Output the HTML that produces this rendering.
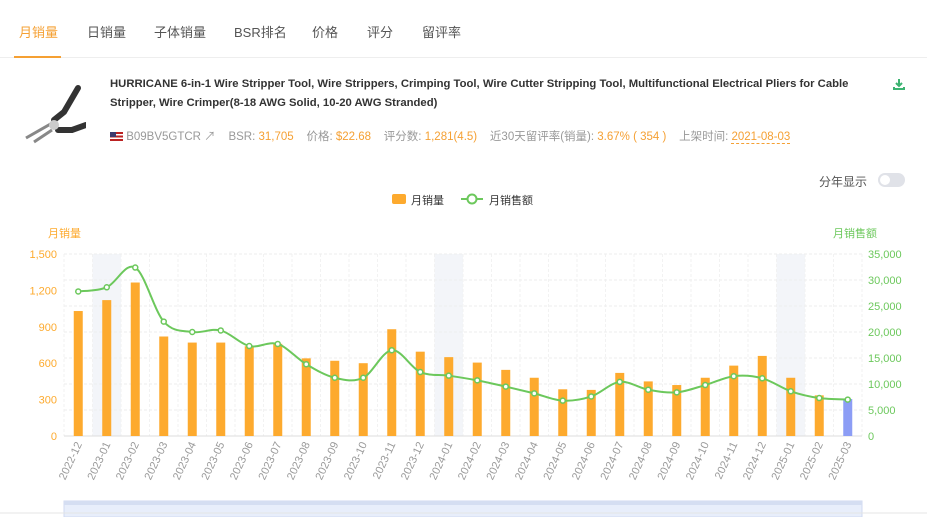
<!DOCTYPE html>
<html><head><meta charset="utf-8"><style>
*{margin:0;padding:0;box-sizing:border-box}
body{width:927px;height:517px;overflow:hidden;background:#fff;font-family:"Liberation Sans","Noto Sans CJK SC",sans-serif;position:relative}
.tabs{position:absolute;left:0;top:0;width:927px;height:58px;border-bottom:1px solid #eee}
.tab{position:absolute;top:22px;font-size:13px;color:#555}
.tab.a{color:#f5a033}
.ul{position:absolute;left:14px;top:56px;width:47px;height:2px;background:#f5a033}
.title{position:absolute;left:110px;top:75px;width:780px;font-size:11.3px;font-weight:bold;color:#333;line-height:19px}
.meta{position:absolute;left:110px;top:128px;font-size:11.5px;color:#999;white-space:nowrap}
.meta b{font-weight:normal;color:#f5a033}
.sw{position:absolute;left:819px;top:173px;font-size:12px;color:#555}
.tg{position:absolute;left:878px;top:173px;width:27px;height:14px;border-radius:7px;background:#e0e2e8}
.tg i{position:absolute;left:2px;top:2px;width:10px;height:10px;border-radius:5px;background:#fff}
</style></head><body>
<div class="tabs">
<span class="tab a" style="left:19px">月销量</span>
<span class="tab" style="left:87px">日销量</span>
<span class="tab" style="left:154px">子体销量</span>
<span class="tab" style="left:234px">BSR排名</span>
<span class="tab" style="left:312px">价格</span>
<span class="tab" style="left:367px">评分</span>
<span class="tab" style="left:422px">留评率</span>
<div class="ul"></div>
</div>
<svg style="position:absolute;left:14px;top:80px" width="72" height="65" viewBox="0 0 72 65">
<path d="M64 8 L50 32 L40 40" stroke="#333" stroke-width="6" fill="none" stroke-linecap="round"/>
<path d="M72 45 L58 50 L44 50" stroke="#333" stroke-width="6" fill="none" stroke-linecap="round"/>
<path d="M40 42 L12 58 M38 50 L20 62" stroke="#888" stroke-width="3" fill="none"/>
<circle cx="40" cy="45" r="5" fill="#ccc"/>
</svg>
<div class="title">HURRICANE 6-in-1 Wire Stripper Tool, Wire Strippers, Crimping Tool, Wire Cutter Stripping Tool, Multifunctional Electrical Pliers for Cable Stripper, Wire Crimper(8-18 AWG Solid, 10-20 AWG Stranded)</div>
<svg style="position:absolute;left:893px;top:78px" width="12" height="12"><path d="M6 1v6M3 5l3 3 3-3M1 9v2h10V9" stroke="#3cb371" stroke-width="2" fill="none"/></svg>
<div class="meta"><span style="display:inline-block;width:13px;height:9px;background:linear-gradient(#b22 0 20%,#fff 20% 40%,#b22 40% 60%,#fff 60% 80%,#b22 80%);position:relative;vertical-align:-1px"><i style="position:absolute;left:0;top:0;width:6px;height:5px;background:#3c3b6e"></i></span> B09BV5GTCR ↗ &nbsp;&nbsp; BSR: <b>31,705</b> &nbsp;&nbsp; 价格: <b>$22.68</b> &nbsp;&nbsp; 评分数: <b>1,281(4.5)</b> &nbsp;&nbsp; 近30天留评率(销量): <b>3.67% ( 354 )</b> &nbsp;&nbsp; 上架时间: <b style="border-bottom:1px dashed #f5a033">2021-08-03</b></div>
<div class="sw">分年显示</div><div class="tg"><i></i></div>
<svg id="c" style="position:absolute;left:0;top:190px" width="927" height="327"></svg>
<script>
var s=document.getElementById('c'),h='',T=190;
function Y(v){return 436-T-v/1500*182}function Y2(v){return 436-T-v/35*182}
var L=64,R=862,W=(R-L)/28;
h+='<rect x="392" y="4" width="14" height="10" fill="#fdaa2e" rx="2"/><text x="411" y="14" font-size="11" fill="#333">月销量</text>';
h+='<line x1="461" y1="9" x2="483" y2="9" stroke="#6cc85c" stroke-width="2"/><circle cx="472" cy="9" r="4.5" fill="#fff" stroke="#6cc85c" stroke-width="2"/><text x="489" y="14" font-size="11" fill="#333">月销售额</text>';
h+='<text x="48" y="47" font-size="11" fill="#fdaa2e">月销量</text><text x="833" y="47" font-size="11" fill="#6cc85c">月销售额</text>';
[1,13,25].forEach(function(i){h+='<rect x="'+(L+W*i)+'" y="'+(254-T)+'" width="'+W+'" height="182" fill="#f3f5f9"/>'});
for(var i=0;i<=28;i++)h+='<line x1="'+(L+W*i)+'" y1="'+(254-T)+'" x2="'+(L+W*i)+'" y2="'+(436-T)+'" stroke="#f2f2f2" stroke-dasharray="3,2"/>';
for(var k=0;k<=7;k++){var y=436-T-k*182/7;h+='<line x1="'+L+'" y1="'+y+'" x2="'+R+'" y2="'+y+'" stroke="#eee" stroke-dasharray="3,2"/><text x="'+(R+6)+'" y="'+(y+4)+'" font-size="11" fill="#6cc85c">'+(k?(k*5)+',000':'0')+'</text>'}
for(var k=0;k<=5;k++){var y=436-T-k*182/5;h+='<text x="57" y="'+(y+4)+'" font-size="11" fill="#fdaa2e" text-anchor="end">'+['0','300','600','900','1,200','1,500'][k]+'</text>'}
h+='<line x1="'+L+'" y1="'+(436-T)+'" x2="'+R+'" y2="'+(436-T)+'" stroke="#ddd"/>';
var b=[1030,1120,1265,820,770,770,740,760,640,620,600,880,695,650,605,545,480,385,380,520,450,420,480,580,660,480,335,305];
var l=[27.8,28.6,32.4,22,20,20.3,17.3,17.7,13.8,11.2,11.2,16.5,12.3,11.6,10.7,9.5,8.2,6.8,7.6,10.4,8.9,8.4,9.8,11.5,11.1,8.6,7.3,7.0];
var lab=['2022-12'];for(var y=2023;y<=2025;y++)for(var m=1;m<=12;m++){if(y==2025&&m>3)break;lab.push(y+'-'+(m<10?'0':'')+m)}
var P=[];
b.forEach(function(v,i){var cx=L+W*i+W/2;h+='<rect x="'+(cx-4.5)+'" y="'+Y(v)+'" width="9" height="'+(436-T-Y(v))+'" fill="'+(i==27?'#8c9df5':'#fdaa2e')+'"/>';P.push([cx,Y2(l[i])]);
h+='<text transform="translate('+(cx+4)+','+(444-T)+') rotate(-65)" font-size="11" fill="#999" text-anchor="end">'+lab[i]+'</text>'});
var d='M'+P[0][0]+' '+P[0][1];
for(var i=0;i<P.length-1;i++){var p0=P[Math.max(i-1,0)],p1=P[i],p2=P[i+1],p3=P[Math.min(i+2,P.length-1)];
d+=' C'+(p1[0]+(p2[0]-p0[0])/6)+' '+(p1[1]+(p2[1]-p0[1])/6)+' '+(p2[0]-(p3[0]-p1[0])/6)+' '+(p2[1]-(p3[1]-p1[1])/6)+' '+p2[0]+' '+p2[1]}
h+='<path d="'+d+'" stroke="#6cc85c" stroke-width="2" fill="none"/>';
P.forEach(function(p){h+='<circle cx="'+p[0]+'" cy="'+p[1]+'" r="2.5" fill="#fff" stroke="#6cc85c" stroke-width="1.5"/>'});
h+='<rect x="'+L+'" y="'+(501-T)+'" width="'+(R-L)+'" height="16" fill="#e8eefb" stroke="#d0daf0"/><rect x="'+L+'" y="'+(501-T)+'" width="'+(R-L)+'" height="4" fill="#d5def2"/>';
h+='<line x1="0" y1="'+(513-T)+'" x2="927" y2="'+(513-T)+'" stroke="#e5e5e5"/>';
s.innerHTML=h;
</script>
</body></html>
